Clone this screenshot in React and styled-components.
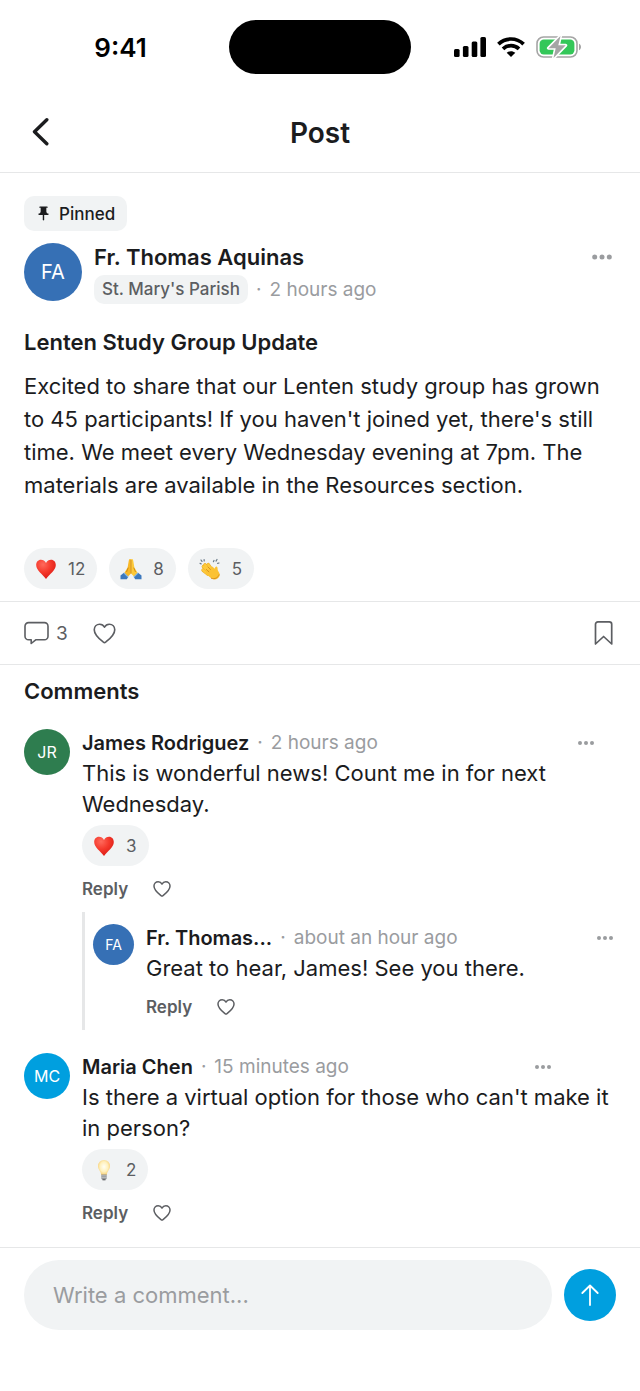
import React from "react";
import styled, { createGlobalStyle } from "styled-components";
import { MdPushPin } from "react-icons/md";


const colors = {
    ink: "#1b1c1e",
    muted: "#5c5e62",
    faint: "#9a9c9f",
    line: "#e6e7e8",
    chip: "#f1f3f4",
    blue: "#009fdf",
    navy: "#3670b5",
    green: "#2e7d4f",
};


const GlobalStyle = createGlobalStyle`
    * {
        box-sizing: border-box;
    }

    body {
        margin: 0;
        background: #fff;
        color: ${colors.ink};
        font-family: Inter, "Liberation Sans", sans-serif;
    }

    h1, h2, h3, p {
        margin: 0;
    }

    svg {
        display: block;
    }

    button {
        border: 0;
        padding: 0;
        background: none;
        font: inherit;
        color: inherit;
        cursor: pointer;
    }
`;


const Screen = styled.div`
    display: flex;
    flex-direction: column;
    min-height: 100vh;
`;

const StatusBar = styled.div`
    display: grid;
    grid-template-columns: 1fr 182px 1fr;
    align-items: center;
    height: 94px;
    color: #000;
`;

const Clock = styled.time`
    padding-left: 12px;
    text-align: center;
    font-size: 26px;
    font-weight: 600;
`;

const Island = styled.div`
    height: 54px;
    border-radius: 27px;
    background: #000;
`;

const StatusIcons = styled.div`
    display: flex;
    align-items: center;
    justify-content: center;
    gap: 11px;
    padding-right: 16px;
`;

const Header = styled.header`
    display: grid;
    grid-template-columns: 64px 1fr 64px;
    align-items: center;
    height: 79px;
    border-bottom: 1px solid ${colors.line};
`;

const BackButton = styled.button`
    display: flex;
    justify-content: flex-end;
    padding-right: 14px;
`;

const PageTitle = styled.h1`
    font-size: 28px;
    line-height: 36px;
    font-weight: 600;
    text-align: center;
`;

const Post = styled.article`
    padding: 23px 24px 12px;
    border-bottom: 1px solid ${colors.line};
`;

const Pinned = styled.div`
    display: inline-flex;
    align-items: center;
    gap: 7px;
    height: 35px;
    padding: 0 12px 0 11px;
    border-radius: 10px;
    background: ${colors.chip};
    font-size: 17px;
    font-weight: 500;
`;

const PostHead = styled.div`
    display: flex;
    gap: 12px;
    margin-top: 12px;
    padding-right: 4px;
`;

const Avatar = styled.div`
    display: flex;
    flex: none;
    align-items: center;
    justify-content: center;
    width: ${(props) => props.$size}px;
    height: ${(props) => props.$size}px;
    margin-top: ${(props) => (props.$size < 58 ? 1 : 0)}px;
    border-radius: 50%;
    background: ${(props) => props.$color};
    color: #fff;
    font-size: ${(props) => props.$fontSize}px;
`;

const Author = styled.div`
    flex: 1;
    min-width: 0;
`;

const AuthorName = styled.h2`
    font-size: 22px;
    line-height: 28px;
    font-weight: 600;
`;

const AuthorMeta = styled.div`
    display: flex;
    align-items: center;
    gap: 8px;
    margin-top: 4px;
    color: ${colors.faint};
    font-size: 19px;
    line-height: 29px;
`;

const Parish = styled.span`
    padding: 0 8px;
    border-radius: 10px;
    background: ${colors.chip};
    color: ${colors.muted};
    font-size: 17px;
    font-weight: 500;
`;

const MenuButton = styled.button`
    display: flex;
    align-items: center;
    height: 28px;
    color: ${colors.faint};
`;

const PostTitle = styled.h3`
    margin-top: 22px;
    font-size: 22px;
    line-height: 32px;
    font-weight: 600;
`;

const PostText = styled.p`
    margin: 12px 0 46px;
    font-size: 22px;
    line-height: 33px;
`;

const Reactions = styled.div`
    display: flex;
    gap: 12px;
`;

const Reaction = styled.button`
    display: flex;
    align-items: center;
    gap: 11px;
    height: 41px;
    padding: 0 12px 0 11px;
    border-radius: 21px;
    background: ${colors.chip};
    color: ${colors.muted};
    font-size: 17px;
`;

const ActionBar = styled.div`
    display: flex;
    align-items: center;
    gap: 25px;
    height: 63px;
    padding: 0 24px;
    border-bottom: 1px solid ${colors.line};
    color: ${colors.muted};

    button {
        display: flex;
        align-items: center;
        gap: 7px;
        font-size: 19px;
    }

    button:last-child {
        margin-left: auto;
    }
`;

const Comments = styled.section`
    flex: 1;
    padding: 12px 24px 11px;
`;

const CommentsTitle = styled.h2`
    margin-bottom: 23px;
    font-size: 22px;
    line-height: 28px;
    font-weight: 600;
`;

const CommentRow = styled.div`
    display: flex;
    gap: 12px;

    & + & {
        margin-top: 22px;
    }
`;

const CommentBody = styled.div`
    flex: 1;
    min-width: 0;
`;

const CommentHead = styled.div`
    display: flex;
    align-items: center;
    gap: 8px;
    padding-right: ${(props) => props.$inset}px;
    color: ${colors.faint};
    font-size: 19px;
    line-height: 30px;

    strong {
        color: ${colors.ink};
        font-size: 20px;
        font-weight: 600;
    }

    button {
        margin-left: auto;
    }
`;

const CommentText = styled.p`
    font-size: 22px;
    line-height: 31px;
`;

const CommentReactions = styled(Reactions)`
    margin-top: 5px;
`;

const CommentActions = styled.div`
    display: flex;
    align-items: center;
    gap: 25px;
    height: 46px;
    color: ${colors.muted};
    font-size: 17px;
    font-weight: 600;
`;

const Replies = styled.div`
    padding: 11px 0 0 8px;
    border-left: 3px solid ${colors.line};
`;

const Composer = styled.form`
    display: flex;
    align-items: center;
    gap: 12px;
    padding: 12px 24px 61px;
    border-top: 1px solid ${colors.line};
`;

const CommentInput = styled.input`
    flex: 1;
    min-width: 0;
    height: 70px;
    padding: 0 29px;
    border: 0;
    border-radius: 35px;
    outline: none;
    background: ${colors.chip};
    color: ${colors.ink};
    font: inherit;
    font-size: 22px;

    &::placeholder {
        color: ${colors.faint};
        opacity: 1;
    }
`;

const SendButton = styled.button`
    display: flex;
    align-items: center;
    justify-content: center;
    width: 52px;
    height: 52px;
    border-radius: 50%;
    background: ${colors.blue};
    color: #fff;
`;


const SignalIcon = () => (
    <svg width="32" height="21" viewBox="0 0 32 21" fill="currentColor">
        <rect x="0" y="12" width="5.6" height="8" rx="1.5" />
        <rect x="8.9" y="9" width="5.6" height="11" rx="1.5" />
        <rect x="17.7" y="4.5" width="5.6" height="15.5" rx="1.5" />
        <rect x="26.4" y="0" width="5.6" height="20" rx="1.5" />
    </svg>
);

const WifiIcon = () => (
    <svg width="28" height="21" viewBox="0 0 28 21" fill="none" stroke="currentColor" strokeWidth="3.7">
        <path d="M1.4 7.1C8.4 .3 19.6 .3 26.6 7.1" />
        <path d="M6 11.9c4.5-4.3 11.5-4.3 16 0" />
        <path d="M14 20l-4.3-4.2c2.4-2.2 6.2-2.2 8.6 0z" fill="currentColor" stroke="none" />
    </svg>
);

const BatteryIcon = () => (
    <svg width="46" height="22" viewBox="0 0 46 22">
        <rect x="1" y="1" width="40" height="20" rx="6.5" fill="#fff" stroke="#a5a5a5" strokeWidth="1.6" />
        <rect x="3.6" y="3.600" width="34.800" height="14.800" rx="4.200" fill="#34c759" />
        <path d="M43 7.8c2.7 1 2.7 5.4 0 6.4z" fill="#a5a5a5" />
        <path d="M24.500 0L12.500 12.200h7.200L17.500 22l12.200-12.700h-7.400z" fill="#a5a5a5" stroke="#fff" strokeWidth="3.200" strokeLinejoin="round" paintOrder="stroke" />
    </svg>
);

const BackIcon = () => (
    <svg width="18" height="30" viewBox="0 0 18 30" fill="none" stroke="currentColor" strokeWidth="3.400" strokeLinecap="round" strokeLinejoin="round">
        <path d="M14.800 1.800L2.500 13.800l12.300 12" />
    </svg>
);

const DotsIcon = ({ width = 16 }) => (
    <svg width={width} height="6" viewBox={width > 16 ? "0 0 20 6" : "0 0 16 6"} fill="currentColor">
        {(width > 16 ? [2.7, 10, 17.3] : [2, 8, 14]).map((x) => (
            <circle key={x} cx={x} cy="3" r={width > 16 ? 2.5 : 2} />
        ))}
    </svg>
);

const BubbleIcon = () => (
    <svg width="25" height="24" viewBox="0 0 25 24" fill="none" stroke="currentColor" strokeWidth="1.6" strokeLinejoin="round">
        <path d="M4.600 1.600h15.800a3.600 3.600 0 0 1 3.600 3.600v10a3.600 3.600 0 0 1-3.600 3.600h-8.700L7.200 22.500v-3.700H4.600A3.600 3.600 0 0 1 1 15.200V5.200a3.600 3.600 0 0 1 3.600-3.600z" />
    </svg>
);

const HeartIcon = ({ size = 23 }) => (
    <svg width={size} height={size} viewBox="0 0 24 24" fill="none" stroke="currentColor" strokeWidth={size > 20 ? 1.7 : 2} strokeLinejoin="round">
        <path d="M12 5.400C10.900 3.300 9.200 2.300 7 2.300 3.700 2.300 1.300 4.800 1.300 8.100c0 5.700 5.300 9.600 9.500 12.900.8.600 1.600.6 2.400 0 4.200-3.300 9.500-7.200 9.500-12.900 0-3.300-2.400-5.800-5.700-5.800-2.200 0-3.900 1-5 3.100z" />
    </svg>
);

const BookmarkIcon = () => (
    <svg width="25" height="26" viewBox="0 0 25 26" fill="none" stroke="currentColor" strokeWidth="1.7" strokeLinejoin="round">
        <path d="M4.500 24V4.300a2.400 2.400 0 0 1 2.400-2.400h11.400a2.400 2.400 0 0 1 2.400 2.400V24l-8.100-7.500z" />
    </svg>
);

const ArrowUpIcon = () => (
    <svg width="20" height="24" viewBox="0 0 20 24" fill="none" stroke="currentColor" strokeWidth="1.8" strokeLinecap="round" strokeLinejoin="round">
        <path d="M10 22V2.500M2.300 10L10 2.500l7.700 7.500" />
    </svg>
);


const RedHeart = () => (
    <svg width="22" height="22" viewBox="0 0 22 22">
        <defs>
            <radialGradient id="heartFill" cx=".35" cy=".25" r=".8">
                <stop offset="0" stopColor="#ff6a5c" />
                <stop offset=".5" stopColor="#f5392c" />
                <stop offset="1" stopColor="#d91a14" />
            </radialGradient>
        </defs>
        <path d="M11 5C9.900 2.700 8 1.700 6 1.700 3 1.700 1.200 4 1.200 6.900c0 5.600 6.200 8.900 9.800 14 3.600-5.100 9.800-8.400 9.800-14 0-2.900-1.800-5.200-4.800-5.200-2 0-3.900 1-5 3.300z" fill="url(#heartFill)" />
    </svg>
);

const PrayingHands = () => (
    <svg width="22" height="22" viewBox="0 0 22 22">
        <path d="M10.900 1.200c-1-.7-1.900 0-2.100 1.300L7.600 9.600 4 15.500l2.900 4.200 4-4.200z" fill="#f9b826" />
        <path d="M11.100 1.200c1-.7 1.900 0 2.100 1.300l1.200 7.100 3.600 5.900-2.900 4.200-4-4.200z" fill="#fcc93a" />
        <path d="M11 2v13.500M8.300 9.600L6.500 14M13.700 9.600l1.800 4.400" fill="none" stroke="#c8800f" strokeWidth=".8" />
        <path d="M3.900 14.800l4.300 4.300-1.400 2.200H.5v-3.900z" fill="#3d78bd" />
        <path d="M18.100 14.800l-4.300 4.300 1.400 2.200h6.300v-3.900z" fill="#3d78bd" />
        <path d="M3.900 14.800l4.300 4.300M18.100 14.800l-4.300 4.300" stroke="#7fb5e8" strokeWidth="1.2" />
    </svg>
);

const ClappingHands = () => (
    <svg width="22" height="22" viewBox="0 0 22 22">
        <g fill="none" stroke="#e9a71c" strokeWidth="3.3" strokeLinecap="round">
            <path d="M9.500 13.500L4.300 8.600M10 11.500L6 6.800M12 10.500L9.300 6.600M9 16.200l-5-4.100" />
        </g>
        <g fill="none" stroke="#fdc93b" strokeWidth="2.4" strokeLinecap="round">
            <path d="M9.500 13.500L4.300 8.600M10 11.500L6 6.800M12 10.500L9.300 6.600M9 16.200l-5-4.100" />
        </g>
        <path d="M6.500 14.500l6.800-6 2.500 2.300c.1-1.500 1.100-2.600 2.100-2.100 1.200.6.300 2.200 1.100 4.100.9 1.900 2.400 3.100 1.500 5.100-1.100 2.600-3.600 4-6.200 3.300-2.800-.8-5.300-3.600-7.800-6.700z" fill="#fbc233" />
        <path d="M12 20.200c3.800 1.400 7.300-.6 8.200-3.800M7 11.200l3.200 2.900M8.700 8.700l3 3" fill="none" stroke="#cf8415" strokeWidth=".8" />
        <path d="M1 5.300l1.100.6M2 2l1 1.400M5.100 1.500l.1 1.500M15 2.500l-.6 1.200M18 1.500l-1 1.600M20 5l-1.400.3" stroke="#677887" strokeWidth="1.2" strokeLinecap="round" />
    </svg>
);

const LightBulb = () => (
    <svg width="22" height="22" viewBox="0 0 22 22">
        <defs>
            <radialGradient id="bulbFill" cx=".5" cy=".45" r=".55">
                <stop offset="0" stopColor="#fffef4" />
                <stop offset=".6" stopColor="#fff1bd" />
                <stop offset="1" stopColor="#f6cf78" />
            </radialGradient>
        </defs>
        <path d="M11 1a6 6 0 0 0-6 6.200c0 3.400 2.900 4.900 3.200 8.800h5.600c.3-3.900 3.200-5.400 3.200-8.800A6 6 0 0 0 11 1z" fill="url(#bulbFill)" />
        <path d="M8.300 15.500h5.400v3.700c0 2.300-5.400 2.300-5.400 0z" fill="#8d9093" />
        <path d="M8.300 16.900h5.400M8.300 18.700h5.400" stroke="#d5d7d9" strokeWidth=".7" />
        <path d="M9.500 20.400h3v.9h-3z" fill="#4b4d50" />
    </svg>
);

const emojis = {
    heart: RedHeart,
    pray: PrayingHands,
    clap: ClappingHands,
    bulb: LightBulb,
};


const postReactions = [
    { emoji: "heart", count: 12 },
    { emoji: "pray", count: 8 },
    { emoji: "clap", count: 5 },
];

const comments = [
    {
        name: "James Rodriguez",
        initials: "JR",
        color: colors.green,
        time: "2 hours ago",
        text: "This is wonderful news! Count me in for next Wednesday.",
        inset: 22,
        reactions: [{ emoji: "heart", count: 3 }],
        replies: [
            {
                name: "Fr. Thomas...",
                initials: "FA",
                color: colors.navy,
                time: "about an hour ago",
                text: "Great to hear, James! See you there.",
                inset: 3,
            },
        ],
    },
    {
        name: "Maria Chen",
        initials: "MC",
        color: colors.blue,
        time: "15 minutes ago",
        text: "Is there a virtual option for those who can't make it in person?",
        inset: 65,
        reactions: [{ emoji: "bulb", count: 2 }],
    },
];


const ReactionPill = ({ emoji, count }) => {
    const Emoji = emojis[emoji];

    return (
        <Reaction type="button" aria-label={`${emoji} ${count}`}>
            <Emoji />
            {count}
        </Reaction>
    );
};

const Comment = ({ comment, nested }) => (
    <CommentRow>
        <Avatar $size={nested ? 41 : 46} $fontSize={nested ? 14 : 16} $color={comment.color}>
            {comment.initials}
        </Avatar>
        <CommentBody>
            <CommentHead $inset={comment.inset}>
                <strong>{comment.name}</strong>
                <span>·</span>
                <span>{comment.time}</span>
                <MenuButton type="button" aria-label="Comment options">
                    <DotsIcon />
                </MenuButton>
            </CommentHead>
            <CommentText>{comment.text}</CommentText>
            {comment.reactions && (
                <CommentReactions>
                    {comment.reactions.map((reaction) => (
                        <ReactionPill key={reaction.emoji} {...reaction} />
                    ))}
                </CommentReactions>
            )}
            <CommentActions>
                <button type="button">Reply</button>
                <button type="button" aria-label="Like comment">
                    <HeartIcon size={18} />
                </button>
            </CommentActions>
            {comment.replies && (
                <Replies>
                    {comment.replies.map((reply) => (
                        <Comment key={reply.name} comment={reply} nested />
                    ))}
                </Replies>
            )}
        </CommentBody>
    </CommentRow>
);


const App = () => {
    const [draft, setDraft] = React.useState("");

    return (
        <>
            <GlobalStyle />
            <Screen>
                <StatusBar>
                    <Clock>9:41</Clock>
                    <Island />
                    <StatusIcons>
                        <SignalIcon />
                        <WifiIcon />
                        <BatteryIcon />
                    </StatusIcons>
                </StatusBar>

                <Header>
                    <BackButton type="button" aria-label="Back">
                        <BackIcon />
                    </BackButton>
                    <PageTitle>Post</PageTitle>
                </Header>

                <Post>
                    <Pinned>
                        <MdPushPin size={17} />
                        Pinned
                    </Pinned>
                    <PostHead>
                        <Avatar $size={58} $fontSize={20} $color={colors.navy}>FA</Avatar>
                        <Author>
                            <AuthorName>Fr. Thomas Aquinas</AuthorName>
                            <AuthorMeta>
                                <Parish>St. Mary's Parish</Parish>
                                <span>·</span>
                                <span>2 hours ago</span>
                            </AuthorMeta>
                        </Author>
                        <MenuButton type="button" aria-label="Post options">
                            <DotsIcon width={20} />
                        </MenuButton>
                    </PostHead>
                    <PostTitle>Lenten Study Group Update</PostTitle>
                    <PostText>
                        Excited to share that our Lenten study group has grown to 45 participants!
                        If you haven't joined yet, there's still time. We meet every Wednesday
                        evening at 7pm. The materials are available in the Resources section.
                    </PostText>
                    <Reactions>
                        {postReactions.map((reaction) => (
                            <ReactionPill key={reaction.emoji} {...reaction} />
                        ))}
                    </Reactions>
                </Post>

                <ActionBar>
                    <button type="button" aria-label="3 comments">
                        <BubbleIcon />
                        3
                    </button>
                    <button type="button" aria-label="Like post">
                        <HeartIcon />
                    </button>
                    <button type="button" aria-label="Save post">
                        <BookmarkIcon />
                    </button>
                </ActionBar>

                <Comments>
                    <CommentsTitle>Comments</CommentsTitle>
                    {comments.map((comment) => (
                        <Comment key={comment.name} comment={comment} />
                    ))}
                </Comments>

                <Composer onSubmit={(e) => e.preventDefault()}>
                    <CommentInput
                        aria-label="Write a comment"
                        placeholder="Write a comment..."
                        value={draft}
                        onChange={(e) => setDraft(e.target.value)}
                    />
                    <SendButton type="submit" aria-label="Send">
                        <ArrowUpIcon />
                    </SendButton>
                </Composer>
            </Screen>
        </>
    );
};


export default App;
